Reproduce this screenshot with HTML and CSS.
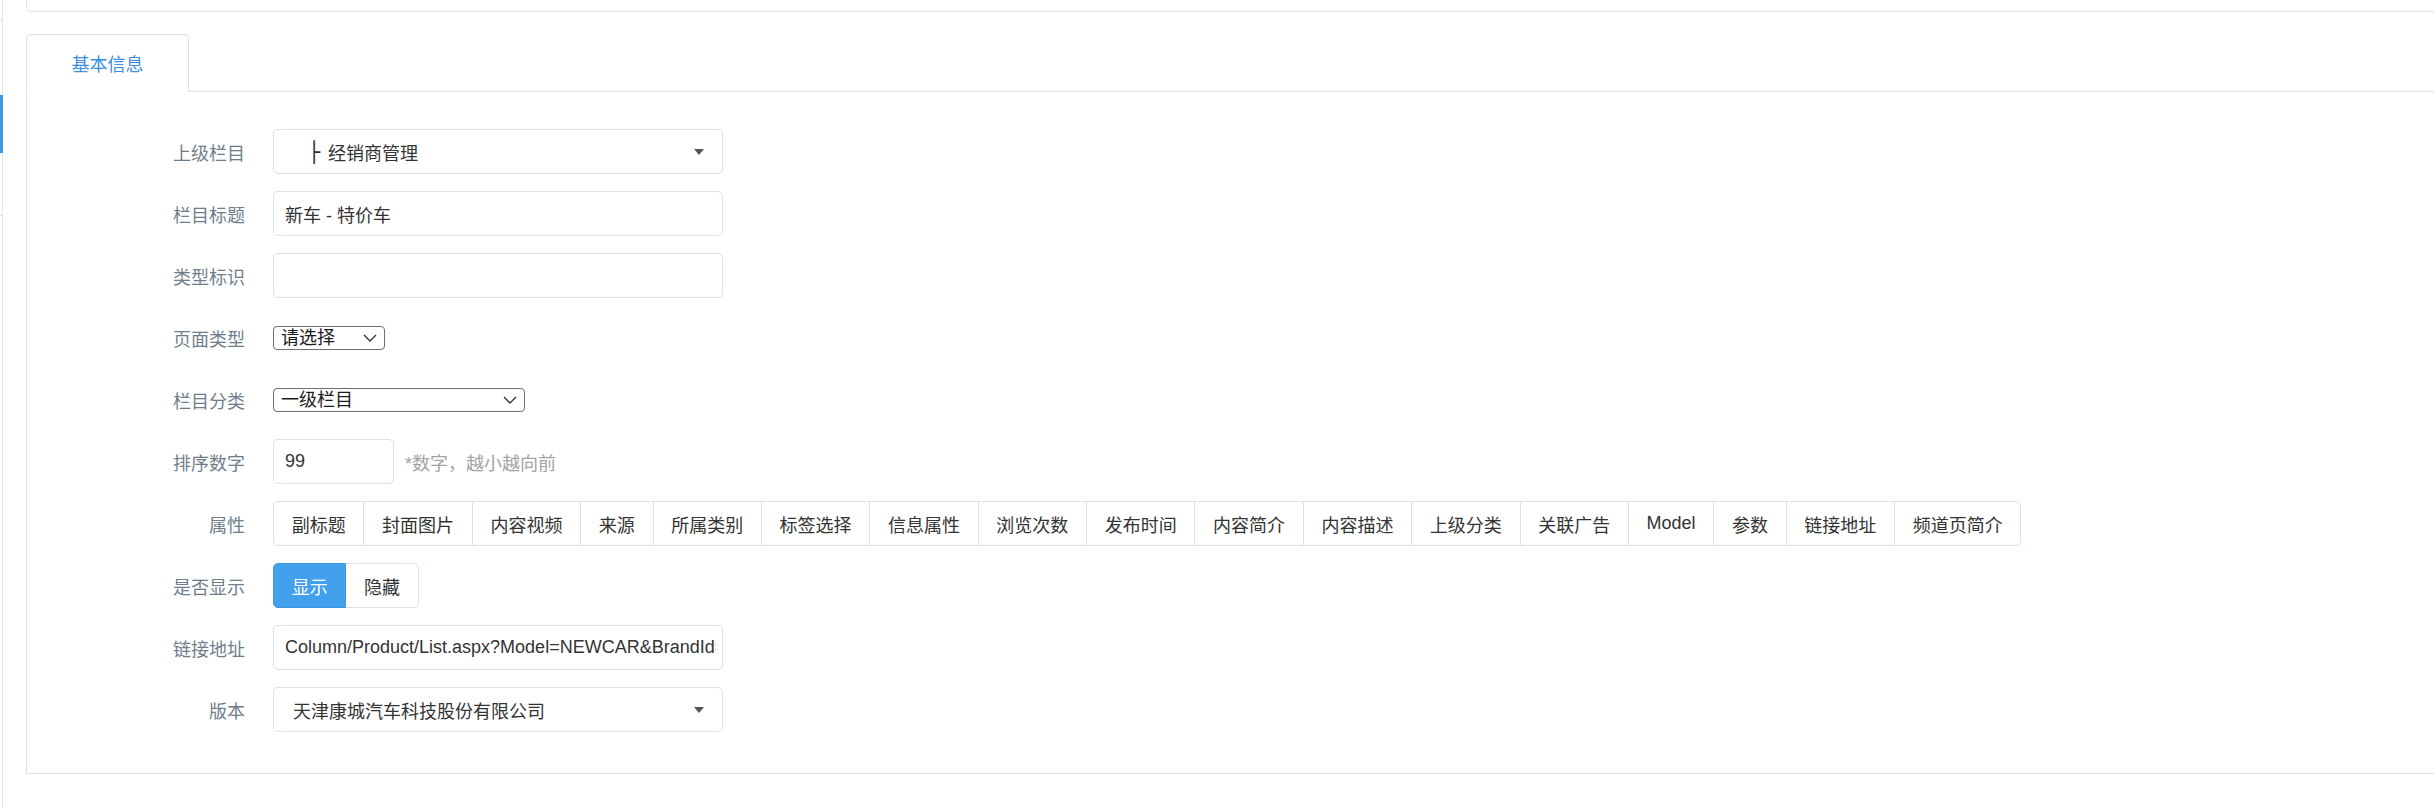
FILE: index.html
```html
<!DOCTYPE html>
<html lang="zh-CN">
<head>
<meta charset="utf-8">
<title>栏目编辑</title>
<link rel="stylesheet" href="styles.css">
</head>
<body>
<div class="layout">
  <aside class="side">
    <div class="side-item s1"></div>
    <div class="side-item s2"></div>
    <div class="side-item s3"></div>
    <div class="side-item s4"></div>
  </aside>
  <main class="main">
    <div class="top-card"></div>
    <div class="tabs">
      <ul class="nav-tabs">
        <li class="tab active">基本信息</li>
      </ul>
      <div class="tab-pane">
        <form class="form">
          <div class="row">
            <label class="lbl">上级栏目</label>
            <div class="ctrl sel2">
              <span class="sel-text"><span class="tree">├</span>经销商管理</span>
              <span class="caret"></span>
            </div>
          </div>
          <div class="row">
            <label class="lbl">栏目标题</label>
            <input class="ctrl inp" type="text" value="新车 - 特价车">
          </div>
          <div class="row">
            <label class="lbl">类型标识</label>
            <input class="ctrl inp" type="text" value="">
          </div>
          <div class="row">
            <label class="lbl">页面类型</label>
            <div class="nsel nsel-sm">
              <span>请选择</span>
              <svg class="chev" width="14" height="8" viewBox="0 0 14 8"><path d="M1 1 L7 7 L13 1" fill="none" stroke="#333" stroke-width="1.4"/></svg>
            </div>
          </div>
          <div class="row">
            <label class="lbl">栏目分类</label>
            <div class="nsel nsel-md">
              <span>一级栏目</span>
              <svg class="chev" width="14" height="8" viewBox="0 0 14 8"><path d="M1 1 L7 7 L13 1" fill="none" stroke="#333" stroke-width="1.4"/></svg>
            </div>
          </div>
          <div class="row">
            <label class="lbl">排序数字</label>
            <input class="ctrl inp inp-sm" type="text" value="99">
            <span class="hint">*数字，越小越向前</span>
          </div>
          <div class="row">
            <label class="lbl">属性</label>
            <div class="btn-group">
              <span class="btn">副标题</span>
              <span class="btn">封面图片</span>
              <span class="btn">内容视频</span>
              <span class="btn">来源</span>
              <span class="btn">所属类别</span>
              <span class="btn">标签选择</span>
              <span class="btn">信息属性</span>
              <span class="btn">浏览次数</span>
              <span class="btn">发布时间</span>
              <span class="btn">内容简介</span>
              <span class="btn">内容描述</span>
              <span class="btn">上级分类</span>
              <span class="btn">关联广告</span>
              <span class="btn">Model</span>
              <span class="btn">参数</span>
              <span class="btn">链接地址</span>
              <span class="btn">频道页简介</span>
            </div>
          </div>
          <div class="row">
            <label class="lbl">是否显示</label>
            <div class="btn-group">
              <span class="btn btn-on">显示</span>
              <span class="btn">隐藏</span>
            </div>
          </div>
          <div class="row">
            <label class="lbl">链接地址</label>
            <input class="ctrl inp" type="text" value="Column/Product/List.aspx?Model=NEWCAR&amp;BrandId=">
          </div>
          <div class="row">
            <label class="lbl">版本</label>
            <div class="ctrl sel2">
              <span class="sel-text">天津康城汽车科技股份有限公司</span>
              <span class="caret"></span>
            </div>
          </div>
        </form>
      </div>
    </div>
  </main>
</div>
</body>
</html>
```
FILE: styles.css
```css
* { box-sizing: border-box; }
html, body { margin: 0; padding: 0; background: #fff; }
body {
  font-family: "Liberation Sans", "Noto Sans CJK SC", sans-serif;
  font-size: 18px;
  color: #333;
  width: 2434px;
  height: 808px;
  overflow: hidden;
}
.layout { display: flex; height: 808px; }

.side {
  width: 3px;
  flex: none;
  border-right: 1px solid #dfe6ec;
  display: flex;
  flex-direction: column;
}
.side-item { flex: none; }
.s1 { height: 21px; border-bottom: 1px solid #d9e1e8; }
.s2 { height: 74px; }
.s3 { height: 58px; background: #3d9be9; margin-right: -1px; }
.s4 { height: 63px; border-bottom: 1px solid #d9e1e8; }

.main { flex: 1; padding-left: 23px; margin-right: -40px; }

.top-card {
  height: 12px;
  border: 1px solid #d5e2ed;
  border-top: none;
  border-radius: 0 0 5px 5px;
}

.tabs { margin-top: 22px; }
.nav-tabs {
  display: flex;
  list-style: none;
  margin: 0;
  padding: 0;
  border-bottom: 1px solid #d5e2ed;
}
.tab {
  width: 163px;
  height: 58px;
  margin-bottom: -1px;
  display: flex;
  align-items: center;
  justify-content: center;
  border: 1px solid #d5e2ed;
  border-bottom-color: #fff;
  border-radius: 5px 5px 0 0;
  background: #fff;
  color: #3a8fe4;
}

.tab-pane {
  border: 1px solid #d5e2ed;
  border-top: none;
  padding: 37px 0 41px 0;
}

.row {
  display: flex;
  align-items: center;
  height: 45px;
  margin-bottom: 17px;
}
.row:last-child { margin-bottom: 0; }

.lbl {
  width: 218px;
  flex: none;
  text-align: right;
  color: #6f7e8b;
  margin-right: 28px;
}

.ctrl {
  width: 450px;
  height: 45px;
  border: 1px solid #d5e2ed;
  border-radius: 5px;
  background: #fff;
}
.inp {
  font: inherit;
  color: #333;
  padding: 0 6px 0 11px;
  outline: none;
}
.inp-sm { width: 121px; }

.sel2 {
  display: flex;
  align-items: center;
  justify-content: space-between;
  padding: 0 18px 0 19px;
  color: #333;
}
.sel-text { white-space: nowrap; display: flex; align-items: center; }
.tree {
  font-family: "DejaVu Sans", sans-serif;
  font-size: 20px;
  line-height: 24px;
  margin-left: 15px;
  margin-right: 8px;
  color: #333;
}
.caret {
  width: 0;
  height: 0;
  border-left: 5px solid transparent;
  border-right: 5px solid transparent;
  border-top: 6px solid #555;
}

.nsel {
  height: 24px;
  display: flex;
  align-items: center;
  justify-content: space-between;
  border: 1px solid #6f6f6f;
  border-radius: 4px;
  padding: 0 7px 0 7px;
  color: #1a1a1a;
  line-height: 22px;
  background: #fff;
}
.nsel-sm { width: 112px; }
.nsel-md { width: 252px; }
.chev { flex: none; }

.hint { color: #a3a3a3; margin-left: 11px; }

.btn-group { display: flex; }
.btn {
  height: 45px;
  display: flex;
  align-items: center;
  padding: 0 17.7px;
  border: 1px solid #d5e2ed;
  margin-left: -1px;
  color: #333;
  background: #fff;
  white-space: nowrap;
}
.btn:first-child { margin-left: 0; border-radius: 5px 0 0 5px; }
.btn:last-child { border-radius: 0 5px 5px 0; }
.btn-on {
  background: #42a0ee;
  border-color: #3b97e3;
  color: #fff;
  position: relative;
  z-index: 1;
}
```
